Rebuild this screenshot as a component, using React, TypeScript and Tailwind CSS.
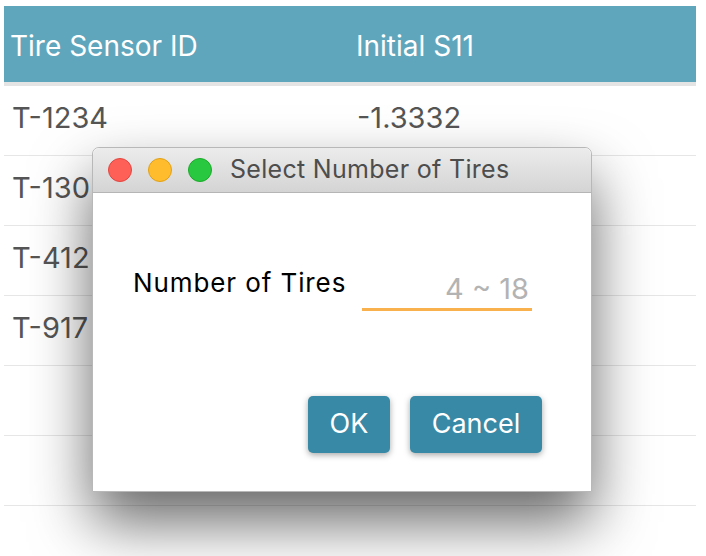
import React from "react";

const rows = [
  ["T-1234", "-1.3332"],
  ["T-130", ""],
  ["T-412", ""],
  ["T-917", ""],
  ["", ""],
  ["", ""],
];

export default function App() {
  return (
    <div className="relative w-[706px] h-[556px] bg-white overflow-hidden font-['Inter','Liberation_Sans',sans-serif]">
      <div className="pt-[6px] pl-[4px] w-[696px]">
        <div className="h-[76px] bg-[#5fa6bd] flex items-center pt-[3px] text-white text-[28px]">
          <div className="w-[352px] pl-[6px]">Tire Sensor ID</div>
          <div>Initial S11</div>
        </div>
        <div className="h-[4px] bg-[#e4e4e4]" />
        {rows.map((r, i) => (
          <div key={i} className="h-[70px] border-b border-[#e6e6e6] flex items-center pb-[5px] text-[#555555] text-[29px]">
            <div className="w-[353px] pl-[8px]">{r[0]}</div>
            <div>{r[1]}</div>
          </div>
        ))}
      </div>

      <div className="absolute left-[92px] top-[147px] w-[500px] h-[345px] rounded-t-[7px] bg-white shadow-[0_30px_60px_rgba(0,0,0,0.6)] border border-[#b8b8b8] flex flex-col">
        <div className="h-[45px] rounded-t-[7px] bg-gradient-to-b from-[#ececec] to-[#d4d4d4] border-b border-[#b5b5b5] flex items-center pl-[15px]">
          <div className="w-[24px] h-[24px] rounded-full bg-[#fe5f57] border border-[#e2463f]" />
          <div className="w-[24px] h-[24px] rounded-full bg-[#ffbd2e] border border-[#e1a116] ml-[16px]" />
          <div className="w-[24px] h-[24px] rounded-full bg-[#28c840] border border-[#1aab29] ml-[16px]" />
          <div className="ml-[18px] text-[25px] text-[#4d4d4d] tracking-[0.3px]">Select Number of Tires</div>
        </div>
        <div className="flex-1 flex flex-col">
          <div className="flex items-end pt-[70px] pl-[40px]">
            <div className="w-[229px] text-[26px] text-black tracking-[0.9px] pb-[9px]">Number of Tires</div>
            <div className="w-[170px] h-[42px] border-b-[3px] border-[#f8b14c] flex items-center justify-end pr-[3px] text-[29px] text-[#b3b3b3]">4 ~ 18</div>
          </div>
          <div className="flex justify-end gap-[20px] pr-[49px] mt-[85px]">
            <div className="w-[82px] h-[57px] rounded-[5px] bg-[#3889a6] text-white text-[27px] flex items-center justify-center shadow-[0_2px_6px_rgba(0,0,0,0.35)]">OK</div>
            <div className="w-[132px] h-[57px] rounded-[5px] bg-[#3889a6] text-white text-[27px] flex items-center justify-center shadow-[0_2px_6px_rgba(0,0,0,0.35)]">Cancel</div>
          </div>
        </div>
      </div>
    </div>
  );
}
